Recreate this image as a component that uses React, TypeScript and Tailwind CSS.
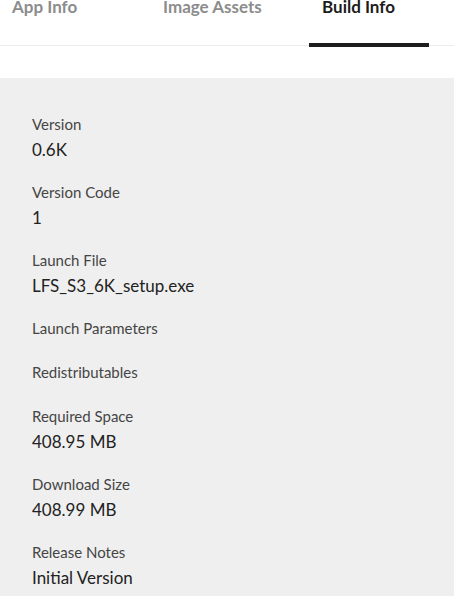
const FIELDS = [
  { label: 'Version', value: '0.6K' },
  { label: 'Version Code', value: '1' },
  { label: 'Launch File', value: 'LFS_S3_6K_setup.exe' },
  { label: 'Launch Parameters', value: '' },
  { label: 'Redistributables', value: '' },
  { label: 'Required Space', value: '408.95 MB' },
  { label: 'Download Size', value: '408.99 MB' },
  { label: 'Release Notes', value: 'Initial Version' },
];

export default function App() {
  return (
    <div className="w-[454px] h-[596px] overflow-hidden bg-white font-['Lato',sans-serif]">
      <div className="flex h-[46px] border-b border-[#ececec] text-[17px] font-bold leading-[20px]">
        <div className="w-[150px] pl-[12px] -mt-[3px] text-[#8c8c8c]">App Info</div>
        <div className="w-[159px] pl-[13px] -mt-[3px] text-[#8c8c8c]">Image Assets</div>
        <div className="relative w-[120px] pl-[13px] -mt-[3px] text-[#1c1c1c]">
          Build Info
          <div className="absolute left-0 right-0 bottom-[-2px] h-[4px] bg-[#1e1e1e]" />
        </div>
      </div>
      <div className="h-[32px]" />
      <div className="bg-[#efefef] h-full pt-[36px] pl-[32px] flex flex-col gap-[20px]">
        {FIELDS.map(f => (
          <div key={f.label}>
            <div className="text-[15px] leading-[20px] text-[#454545]">{f.label}</div>
            <div className="mt-[4px] text-[17px] leading-[24px] text-[#222]">{f.value}</div>
          </div>
        ))}
      </div>
    </div>
  );
}
